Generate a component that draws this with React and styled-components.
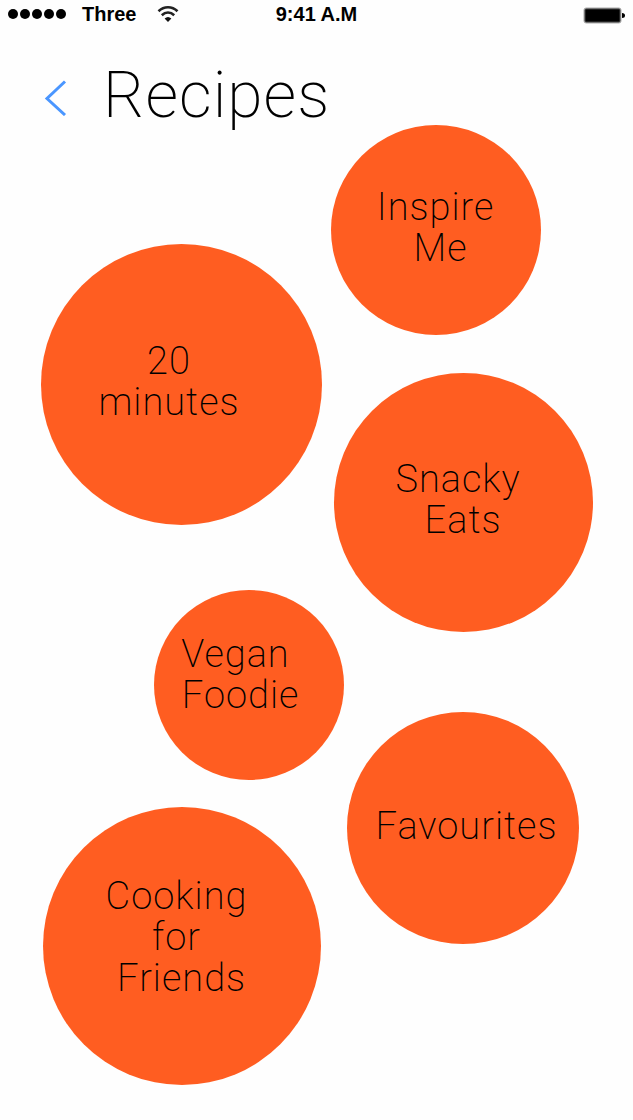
import React from "react";
import styled, { createGlobalStyle } from "styled-components";

const GlobalStyle = createGlobalStyle`
  * { box-sizing: border-box; }
  body {
    margin: 0;
    background: #fefefe;
    color: #000;
    font-family: Roboto, "Liberation Sans", sans-serif;
  }
`;

const Screen = styled.div`
  min-height: 100vh;
  display: flex;
  flex-direction: column;
  padding-bottom: 32px;
`;

const StatusBar = styled.div`
  display: grid;
  grid-template-columns: 1fr auto 1fr;
  align-items: center;
  height: 28px;
  padding: 0 8px;
  font: bold 20px/28px "Liberation Sans", Arial, sans-serif;
`;

const Carrier = styled.div`
  display: flex;
  align-items: center;
`;

const Signal = styled.div`
  display: flex;
  gap: 2px;
  margin-right: 16px;
`;

const Dot = styled.span`
  width: 10px;
  height: 10px;
  border-radius: 50%;
  background: #000;
`;

const WifiIcon = styled.svg`
  margin-left: 20px;
`;

const BatteryIcon = styled.svg`
  justify-self: end;
`;

const Header = styled.header`
  display: flex;
  align-items: center;
  gap: 31px;
  padding: 39px 40px 0;
`;

const BackButton = styled.button`
  display: flex;
  padding: 0;
  border: 0;
  background: none;
  cursor: pointer;
`;

const Title = styled.h1`
  margin: 0;
  font-size: 64px;
  line-height: 58px;
  font-weight: 200;
  letter-spacing: 1px;
`;

const Bubbles = styled.nav`
  display: flex;
  justify-content: center;
`;

const Column = styled.div`
  display: flex;
  flex-direction: column;
  flex: none;
  width: ${(p) => p.$width}px;
  padding-top: ${(p) => p.$top || 0}px;
`;

const Bubble = styled.button`
  flex: none;
  display: flex;
  align-items: center;
  justify-content: center;
  width: ${(p) => p.$size}px;
  height: ${(p) => p.$size}px;
  margin: 0 0 ${(p) => p.$below || 0}px ${(p) => p.$indent || 0}px;
  padding: ${(p) => p.$inset || "0 0 4px"};
  border: 0;
  border-radius: 50%;
  background: #ff5d21;
  color: #000;
  font: 200 38px/41px Roboto, "Liberation Sans", sans-serif;
  letter-spacing: 1px;
  text-align: center;
  white-space: pre;
  cursor: pointer;
`;

export default function App() {
  return (
    <Screen>
      <GlobalStyle />
      <StatusBar>
        <Carrier>
          <Signal>
            {[0, 1, 2, 3, 4].map((n) => (
              <Dot key={n} />
            ))}
          </Signal>
          Three
          <WifiIcon width="24" height="18" viewBox="0 0 24 18" fill="none" stroke="#222" strokeWidth="2.6" aria-label="Wi-Fi">
            <path d="M2.5 6.2C8 1 16 1 21.5 6.2" />
            <path d="M5.8 10.2C9.5 6.8 14.500 6.8 18.2 10.2" />
            <path d="M8.6 13.6Q12 10.6 15.4 13.6L12 17Z" fill="#111" stroke="none" />
          </WifiIcon>
        </Carrier>
        <span>9:41 A.M</span>
        <BatteryIcon width="42" height="20" viewBox="0 0 42 20" aria-label="Battery full">
          <rect x="0.5" y="3.5" width="38" height="16" rx="3" fill="#aaa" />
          <rect x="1.5" y="4.5" width="36" height="14" rx="2" fill="#444" />
          <rect x="2.5" y="5.5" width="34" height="12" rx="1" />
          <path d="M39 9Q42 9 42 11.5T39 14Z" />
        </BatteryIcon>
      </StatusBar>
      <Header>
        <BackButton aria-label="Back">
          <svg width="32" height="40" viewBox="0 0 32 40" fill="none" stroke="#4a96ff" strokeWidth="3">
            <path d="M25 5.500L7 22.500L25 39" />
          </svg>
        </BackButton>
        <Title>Recipes</Title>
      </Header>
      <Bubbles aria-label="Recipe categories">
        <Column $width={290} $top={119}>
          <Bubble $size={281} $below={65} $inset="0 24px 6px 0">{"20\nminutes"}</Bubble>
          <Bubble $size={190} $below={27} $indent={113} $inset="0 26px 20px 0">{"Vegan\n Foodie"}</Bubble>
          <Bubble $size={278} $indent={2} $inset="0 10px 18px 0">{"Cooking\nfor\n Friends"}</Bubble>
        </Column>
        <Column $width={262}>
          <Bubble $size={210} $below={38}>{"Inspire\n Me"}</Bubble>
          <Bubble $size={259} $below={80} $indent={3} $inset="0 10px 6px 0">{"Snacky\n Eats"}</Bubble>
          <Bubble $size={232} $indent={16} $inset="0 0 4px 8px">Favourites</Bubble>
        </Column>
      </Bubbles>
    </Screen>
  );
}
